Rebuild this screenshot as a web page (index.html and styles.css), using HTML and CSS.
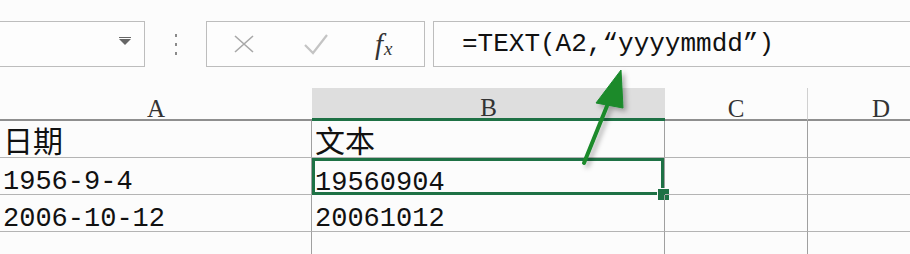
FILE: index.html
```html
<!DOCTYPE html>
<html lang="zh-CN">

<head>
    <meta charset="UTF-8">
    <title>TEXT 函数</title>
    <link rel="stylesheet" href="styles.css">
</head>

<body>

    <div class="page">
        <!-- formula bar -->
        <div class="toolbar">
            <div class="name-box">
                <span class="drop"></span>
            </div>
            <div class="grip">
                <span></span><span></span><span></span>
            </div>
            <div class="fx-box">
                <svg class="icon" width="22" height="20" viewBox="0 0 22 20">
                    <path d="M2 2 L20 18 M20 2 L2 18" stroke="#a8a8a8" stroke-width="1.6" fill="none"/>
                </svg>
                <svg class="icon" width="24" height="22" viewBox="0 0 24 22">
                    <path d="M1 12 L9 20 L23 2" stroke="#c4c4c4" stroke-width="2.2" fill="none"/>
                </svg>
                <span class="fx">f<sub>x</sub></span>
            </div>
            <div class="formula">=TEXT(A2,“yyyymmdd”)</div>
        </div>

        <!-- grid -->
        <div class="sheet">
            <div class="head">A</div>
            <div class="head active">B</div>
            <div class="head">C</div>
            <div class="head">D</div>

            <div class="cell cjk">日期</div>
            <div class="cell cjk">文本</div>
            <div class="cell"></div>
            <div class="cell"></div>

            <div class="cell">1956-9-4</div>
            <div class="cell selected">19560904<span class="handle"></span></div>
            <div class="cell"></div>
            <div class="cell"></div>

            <div class="cell">2006-10-12</div>
            <div class="cell">20061012</div>
            <div class="cell"></div>
            <div class="cell"></div>

            <div class="cell"></div>
            <div class="cell"></div>
            <div class="cell"></div>
            <div class="cell"></div>
        </div>

        <!-- pointer arrow -->
        <svg class="arrow" width="910" height="254" viewBox="0 0 910 254">
            <defs>
                <filter id="shade" x="-50%" y="-50%" width="200%" height="200%">
                    <feDropShadow dx="3" dy="3" stdDeviation="2.5" flood-color="#000" flood-opacity="0.3"/>
                </filter>
            </defs>
            <g filter="url(#shade)" fill="#1a8a2c" stroke="#1a8a2c">
                <path d="M584 163 L607 106" stroke-width="4" stroke-linecap="round" fill="none"/>
                <polygon points="621,70 596,103 623,108" stroke-width="1" stroke-linejoin="round"/>
            </g>
        </svg>
    </div>

</body>

</html>
```

FILE: styles.css
```css
body {
    margin: 0;
    padding: 0;
    background-color: #fcfcfc;
    font-family: "Liberation Mono", monospace;
    overflow: hidden;
}

.page {
    position: relative;
    width: 910px;
    height: 254px;
    overflow: hidden;
}

.toolbar {
    display: flex;
    align-items: stretch;
    padding-top: 21px;
    height: 46px;
}

.name-box {
    width: 147px;
    margin-left: -2px;
    border: 1px solid #bdbdbd;
    display: flex;
    align-items: center;
    justify-content: flex-end;
    padding-right: 13px;
    box-sizing: border-box;
    background-color: #fdfdfd;
}

.drop {
    width: 0;
    height: 0;
    border-left: 6px solid transparent;
    border-right: 6px solid transparent;
    border-top: 6px solid #666;
    position: relative;
    top: -2px;
}

.drop::before {
    content: "";
    position: absolute;
    left: -6px;
    top: -8px;
    width: 12px;
    height: 1px;
    background-color: #666;
}

.grip {
    width: 61px;
    display: flex;
    flex-direction: column;
    align-items: center;
    justify-content: center;
    gap: 6px;
}

.grip span {
    width: 2px;
    height: 3px;
    background-color: #8a8a8a;
}

.fx-box {
    width: 219px;
    border: 1px solid #bdbdbd;
    box-sizing: border-box;
    display: flex;
    align-items: center;
    padding-left: 26px;
    background-color: #fdfdfd;
}

.fx-box .icon:nth-child(1) {
    margin-right: 49px;
}

.fx-box .icon:nth-child(2) {
    margin-right: 47px;
}

.fx {
    font-family: "Liberation Serif", serif;
    font-style: italic;
    font-size: 29px;
    color: #333;
    line-height: 1;
}

.fx sub {
    font-size: 19px;
    vertical-align: -1px;
    margin-left: 1px;
}

.formula {
    flex: 1;
    margin-left: 8px;
    border: 1px solid #bdbdbd;
    border-right: none;
    box-sizing: border-box;
    padding-left: 28px;
    display: flex;
    align-items: center;
    font-size: 26px;
    color: #111;
    background-color: #fdfdfd;
}

.sheet {
    display: grid;
    grid-template-columns: 312px 353px 143px 146px;
    grid-template-rows: 33px 37px 37px 37px 30px;
    margin-top: 21px;
}

.head {
    display: flex;
    align-items: flex-end;
    justify-content: center;
    padding-bottom: 0;
    font-family: "Liberation Serif", serif;
    font-size: 25px;
    line-height: 20px;
    color: #333;
    border-bottom: 2px solid #8f8f8f;
    box-sizing: border-box;
}

.head:nth-child(3) {
    border-right: 1px solid #d0d0d0;
}

.head.active {
    background-color: #dedede;
    border-bottom: 3px solid #1e7145;
}

.cell {
    position: relative;
    display: flex;
    align-items: flex-end;
    padding: 0 0 1px 3px;
    box-sizing: border-box;
    border-right: 1px solid #a0a0a0;
    border-bottom: 1px solid #b4b4b4;
    font-size: 27px;
    line-height: 22px;
    color: #111;
}

.cell:nth-child(4n) {
    border-right: none;
}

.cjk {
    font-family: "Noto Sans CJK SC", sans-serif;
    font-size: 30px;
    line-height: 34px;
    padding-bottom: 1px;
}

.selected {
    box-shadow: inset 0 0 0 3px #1e7145;
    border-bottom: none;
}

.handle {
    position: absolute;
    right: -6px;
    bottom: -6px;
    width: 11px;
    height: 11px;
    background-color: #1e7145;
    border: 1px solid #fcfcfc;
}

.arrow {
    position: absolute;
    left: 0;
    top: 0;
    pointer-events: none;
}
```
